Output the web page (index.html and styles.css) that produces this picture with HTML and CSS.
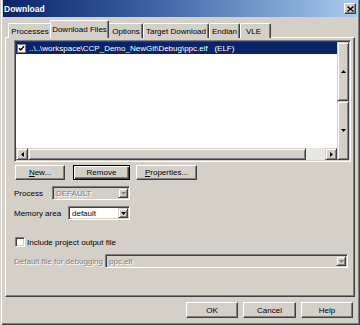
FILE: index.html
```html
<!DOCTYPE html>
<html>
<head>
<meta charset="utf-8">
<title>Download</title>
<link rel="stylesheet" href="styles.css">
</head>
<body>
<div class="win">
  <div class="titlebar">
    <span class="title">Download</span>
    <span class="close"><svg width="7" height="6" viewBox="0 0 7 6"><path d="M0.5 0.5L6.5 5.5M6.5 0.5L0.5 5.5" stroke="#000" stroke-width="1.4"/></svg></span>
  </div>
  <div class="tabs">
    <div class="tab t-proc">Processes</div>
    <div class="tab sel t-dl">Download Files</div>
    <div class="tab t-opt">Options</div>
    <div class="tab t-tgt">Target Download</div>
    <div class="tab t-end">Endian</div>
    <div class="tab t-vle">VLE</div>
  </div>
  <div class="panel">
    <div class="listbox">
      <div class="list-main">
        <div class="list-content">
          <div class="item sel-item">
            <span class="chk-small"><svg width="7" height="7" viewBox="0 0 7 7"><path d="M1 3.2L2.8 5L6 1.3" fill="none" stroke="#000" stroke-width="1.5"/></svg></span>
            <span class="item-text">..\..\workspace\CCP_Demo_NewGit\Debug\ppc.elf   (ELF)</span>
          </div>
        </div>
        <div class="hscroll">
          <div class="sbtn hbtn"><svg width="3" height="5" viewBox="0 0 3 5"><path d="M3 0V5L0 2.5Z" fill="#000"/></svg></div>
          <div class="sbtn thumb"></div>
          <div class="track"></div>
          <div class="sbtn hbtn"><svg width="3" height="5" viewBox="0 0 3 5"><path d="M0 0V5L3 2.5Z" fill="#000"/></svg></div>
        </div>
      </div>
      <div class="vscroll">
        <div class="sbtn vbtn"><svg width="5" height="3" viewBox="0 0 5 3"><path d="M0 3H5L2.5 0Z" fill="#000"/></svg></div>
        <div class="sbtn vbtn"><svg width="5" height="3" viewBox="0 0 5 3"><path d="M0 0H5L2.5 3Z" fill="#000"/></svg></div>
      </div>
    </div>

    <div class="btnrow">
      <div class="btn b-new"><u>N</u>ew...</div>
      <div class="btn default b-rem"><span class="focus">Remove</span></div>
      <div class="btn b-prop"><u>P</u>roperties...</div>
    </div>

    <div class="row r-proc">
      <span class="label l-proc">Process</span>
      <div class="combo disabled c-proc">
        <span class="ctext">DEFAULT</span>
        <span class="sbtn cbtn"><svg width="5" height="3" viewBox="0 0 5 3"><path d="M0 0H5L2.5 3Z" fill="#808080"/></svg></span>
      </div>
    </div>

    <div class="row r-mem">
      <span class="label l-mem">Memory area</span>
      <div class="combo c-mem">
        <span class="ctext">default</span>
        <span class="sbtn cbtn"><svg width="5" height="3" viewBox="0 0 5 3"><path d="M0 0H5L2.5 3Z" fill="#000"/></svg></span>
      </div>
    </div>

    <div class="checkrow">
      <span class="checkbox"></span>
      <span class="check-label">Include project output file</span>
    </div>

    <div class="row r-def">
      <span class="label dis l-def">Default file for debugging</span>
      <div class="combo disabled c-def">
        <span class="ctext">ppc.elf</span>
        <span class="sbtn cbtn"><svg width="5" height="3" viewBox="0 0 5 3"><path d="M0 0H5L2.5 3Z" fill="#808080"/></svg></span>
      </div>
    </div>
  </div>
  <div class="footer">
    <div class="btn f-ok">OK</div>
    <div class="btn f-cancel">Cancel</div>
    <div class="btn f-help">Help</div>
  </div>
</div>
</body>
</html>
```
FILE: styles.css
```css
* { box-sizing: border-box; }
html, body { margin: 0; padding: 0; }
body {
  width: 360px;
  height: 325px;
  overflow: hidden;
  background: #d4d0c8;
  font-family: "Liberation Sans", Arial, sans-serif;
  font-size: 8px;
  color: #000;
}
.win {
  width: 360px;
  height: 325px;
  padding: 0 3px 3px 3px;
  display: flex;
  flex-direction: column;
  background: #d4d0c8;
  box-shadow: inset 1px 0 0 #d4d0c8, inset 2px 0 0 #fff,
              inset -1px -1px 0 #404040, inset -2px -2px 0 #808080;
}
.titlebar {
  height: 17px;
  flex: 0 0 17px;
  display: flex;
  align-items: center;
  justify-content: space-between;
  padding: 0 1px 0 1px;
  background: linear-gradient(90deg, #0a246a 0%, #3a5e9e 40%, #a6caf0 100%);
}
.title {
  color: #fff;
  font-weight: bold;
  font-size: 8.5px;
}
.close {
  width: 12px;
  height: 11px;
  display: flex;
  align-items: center;
  justify-content: center;
  background: #d4d0c8;
  border: 1px solid;
  border-color: #fff #404040 #404040 #fff;
  box-shadow: inset -1px -1px 0 #808080;
}
.tabs {
  display: flex;
  align-items: flex-end;
  height: 21px;
  flex: 0 0 21px;
  margin-bottom: -1px;
  padding-left: 5px;
  position: relative;
  z-index: 1;
}
.tab {
  height: 15px;
  display: flex;
  align-items: center;
  justify-content: center;
  background: #d4d0c8;
  border-top: 1px solid #fff;
  border-left: 1px solid #fff;
  border-right: 1px solid #404040;
  box-shadow: inset -1px 0 0 #808080;
  border-radius: 2px 2px 0 0;
  white-space: nowrap;
  padding-top: 1px;
}
.tab.sel {
  height: 18px;
  margin: 0 -2px;
  position: relative;
  z-index: 2;
  padding-bottom: 2px;
}
.t-proc { width: 44px; }
.t-dl { width: 59px; }
.t-opt { width: 36px; padding-left: 2px; }
.t-tgt { width: 66px; }
.t-end { width: 31px; }
.t-vle { width: 31px; justify-content: flex-start; padding-left: 5px; }

.panel {
  height: 260px;
  flex: 0 0 260px;
  margin: 0 2px;
  border-top: 1px solid #fff;
  border-left: 1px solid #fff;
  border-right: 1px solid #404040;
  border-bottom: 1px solid #404040;
  box-shadow: inset -1px -1px 0 #808080;
  padding: 2px 0 0 8px;
}

.listbox {
  width: 337px;
  height: 122px;
  display: flex;
  padding: 1px;
  border: 1px solid;
  border-color: #808080 #fff #fff #808080;
  box-shadow: inset 1px 1px 0 #404040, inset -1px -1px 0 #d4d0c8;
}
.list-main {
  flex: 1;
  display: flex;
  flex-direction: column;
}
.list-content {
  flex: 1;
  background: #fff;
}
.item {
  height: 12px;
  display: flex;
  align-items: center;
  padding-left: 1px;
}
.sel-item {
  background: #0a246a;
  color: #fff;
}
.chk-small {
  width: 9px;
  height: 9px;
  background: #fff;
  border: 1px solid #808080;
  display: flex;
  align-items: center;
  justify-content: center;
}
.item-text {
  margin-left: 3px;
  white-space: pre;
}
.sbtn {
  background: #d4d0c8;
  border: 1px solid;
  border-color: #d4d0c8 #404040 #404040 #d4d0c8;
  box-shadow: inset 1px 1px 0 #fff, inset -1px -1px 0 #808080;
  display: flex;
  align-items: center;
  justify-content: center;
}
.hscroll {
  height: 12px;
  flex: 0 0 12px;
  display: flex;
}
.hbtn { width: 12px; flex: 0 0 12px; }
.thumb { width: 278px; flex: 0 0 278px; }
.track { flex: 1; background: #e9e7e2; }
.vscroll {
  width: 12px;
  flex: 0 0 12px;
  display: flex;
  flex-direction: column;
}
.vbtn { flex: 1; }

.btn {
  height: 15px;
  display: flex;
  align-items: center;
  justify-content: center;
  background: #d4d0c8;
  border: 1px solid;
  border-color: #fff #404040 #404040 #fff;
  box-shadow: inset -1px -1px 0 #808080;
  white-space: nowrap;
}
.btn u { text-decoration: underline; }
.btn.default {
  border: 1px solid #000;
  box-shadow: inset 1px 1px 0 #fff, inset -1px -1px 0 #404040, inset -2px -2px 0 #808080;
}
.focus {
  padding: 0 8px;
}
.btnrow {
  display: flex;
  margin: 3px 0 0 1px;
}
.b-new { width: 50px; }
.b-rem { width: 57px; margin-left: 8px; }
.b-prop { width: 61px; margin-left: 6px; }

.row {
  display: flex;
  align-items: center;
  height: 14px;
}
.r-proc { margin-top: 6px; }
.r-mem { margin-top: 6px; }
.r-def { margin-top: 6px; }
.label { white-space: nowrap; }
.label.dis { color: #808080; text-shadow: 1px 1px 0 #fff; }
.l-proc { width: 38px; }
.l-mem { width: 54px; }
.l-def { width: 91px; }

.combo {
  height: 14px;
  display: flex;
  padding: 1px;
  border: 1px solid;
  border-color: #808080 #fff #fff #808080;
  box-shadow: inset 1px 1px 0 #404040, inset -1px -1px 0 #d4d0c8;
  background: #fff;
}
.combo.disabled { background: #d4d0c8; }
.ctext {
  flex: 1;
  display: flex;
  align-items: center;
  padding-left: 2px;
  white-space: nowrap;
}
.combo.disabled .ctext { color: #808080; text-shadow: 1px 1px 0 #fff; }
.cbtn { width: 10px; flex: 0 0 10px; }
.c-proc { width: 78px; }
.c-mem { width: 62px; }
.c-def { width: 243px; }

.checkrow {
  display: flex;
  align-items: center;
  height: 12px;
  margin-top: 16px;
  padding-left: 1px;
}
.checkbox {
  width: 10px;
  height: 10px;
  background: #fff;
  border: 1px solid;
  border-color: #808080 #fff #fff #808080;
  box-shadow: inset 1px 1px 0 #404040, inset -1px -1px 0 #d4d0c8;
}
.check-label { margin-left: 2px; }

.footer {
  display: flex;
  justify-content: flex-end;
  margin-top: 5px;
  padding-right: 4px;
}
.footer .btn { height: 16px; }
.f-ok { width: 52px; }
.f-cancel { width: 53px; margin-left: 5px; }
.f-help { width: 52px; margin-left: 5px; }
```
